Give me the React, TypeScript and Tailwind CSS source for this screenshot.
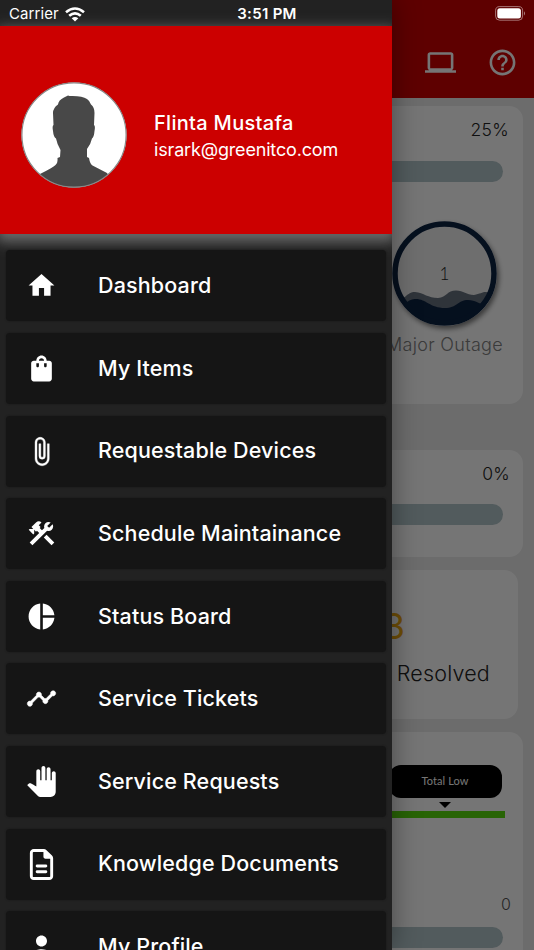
import type { ReactNode } from "react";
import type { IconType } from "react-icons";
import {
  MdAttachFile,
  MdConstruction,
  MdHelpOutline,
  MdHome,
  MdPanTool,
  MdPerson,
  MdPieChart,
  MdShoppingBag,
  MdTimeline,
} from "react-icons/md";
import { FaRegFileLines } from "react-icons/fa6";

const menu: { label: string; icon: IconType; size: number; stroke?: number }[] = [
  { label: "Dashboard", icon: MdHome, size: 31 },
  { label: "My Items", icon: MdShoppingBag, size: 31 },
  { label: "Requestable Devices", icon: MdAttachFile, size: 31, stroke: 0.3 },
  { label: "Schedule Maintainance", icon: MdConstruction, size: 31 },
  { label: "Status Board", icon: MdPieChart, size: 31 },
  { label: "Service Tickets", icon: MdTimeline, size: 31, stroke: 0.4 },
  { label: "Service Requests", icon: MdPanTool, size: 31 },
  { label: "Knowledge Documents", icon: FaRegFileLines, size: 31 },
  { label: "My Profile", icon: MdPerson, size: 33 },
];

const Avatar = () => (
  <svg width="106" height="106" viewBox="0 0 106 106" className="shrink-0">
    <clipPath id="face">
      <circle cx="53" cy="53" r="52.5" />
    </clipPath>
    <circle cx="53" cy="53" r="52.5" fill="#fff" />
    <path
      clipPath="url(#face)"
      fill="#484848"
      d="M47 13.5 L48.5 14 Q61 13.500 66 17 Q69 19 70 22.500 Q73.500 25 73.500 31 L73 43 Q74.500 44 73.500 49 Q73 55 71 56.500 Q69.500 63 66 67 L66 75 L68 76 Q69 82 71.500 83.500 L86 91 L96 106 L8 106 L19 92 Q33 85 34.500 83 Q37 81 36.500 76 L39 75 L39.500 68 Q36 62 35 56.500 Q32.500 55 32 49 Q31 44 32.500 43 L32 31 Q32 26 37 22.500 Q37.500 18 43 15.500 Z"
    />
    <circle cx="53" cy="53" r="52.1" fill="none" stroke="#888" strokeWidth="1.200" />
  </svg>
);

const Wave = () => (
  <div className="relative mr-[6px] h-[105px] w-[105px] rounded-full shadow-[2px_3px_5px_rgba(0,0,0,0.5)]">
    <svg width="105" height="105" viewBox="0 0 105 105">
      <clipPath id="bowl">
        <circle cx="52.500" cy="52.500" r="50" />
      </clipPath>
      <circle cx="52.500" cy="52.500" r="50" fill="#f0f0f0" />
      <g clipPath="url(#bowl)">
        <path
          d="M0 80 C14 80 14 71 23 71 C32 72 36 77 46 77 C55 76 55 69.500 64 69.500 C72 69.500 74 74 82 74 C88 73 90 71 94 71 L105 73 V105 H0 Z"
          fill="#66717f"
        />
        <path
          d="M0 86 C16 84 15 78 24 78 C34 78 38 87 53 87 C65 87 66 79 76 79 C84 79 86 83 92 83 H105 V105 H0 Z"
          fill="#0d2343"
        />
      </g>
      <circle cx="52.500" cy="52.500" r="49.500" fill="none" stroke="#0d2343" strokeWidth="5.500" />
    </svg>
    <span className="absolute inset-0 flex items-center justify-center pt-px font-['Lato'] text-[17px] font-light">
      1
    </span>
  </div>
);

const Bar = () => <div className="h-[21px] w-full rounded-full bg-[#b4c6ca]" />;

const Card = ({ className, children }: { className: string; children: ReactNode }) => (
  <section className={`flex shrink-0 flex-col items-end rounded-[14px] bg-white ${className}`}>
    {children}
  </section>
);

const Page = () => (
  <div className="flex h-full flex-col bg-[#ebebeb] text-[#222]">
    <header className="flex h-[98px] shrink-0 items-end justify-end gap-[31px] bg-[#cc0000] pr-[16px] pb-[20px] text-white">
      <svg width="31" height="31" viewBox="0 0 24 24" fill="currentColor">
        <path d="M20 18c1.100 0 2-.900 2-2V6c0-1.100-.900-2-2-2H4c-1.100 0-2 .900-2 2v10c0 1.100.900 2 2 2H0v2h24v-2h-4zM4 6h16v10.500H4V6z" />
      </svg>
      <MdHelpOutline size={31} />
    </header>

    <main className="flex min-h-0 grow flex-col overflow-hidden pt-[8px] pr-[11px] pl-[11px]">
      <Card className="h-[298px] pt-[12px] pr-[20px] pl-[20px]">
        <p className="-mr-[6px] text-[17.500px] leading-[24px] font-light tracking-[0.3px]">25%</p>
        <div className="mt-[18.500px] w-full">
          <Bar />
        </div>
        <div className="mt-[39.500px]">
          <Wave />
        </div>
        <p className="mt-[7px] text-[18px] leading-[24px] font-light tracking-[0.300px] text-[#808080]">
          Major Outage
        </p>
      </Card>

      <Card className="mt-[46px] h-[107px] pt-[12px] pr-[20px] pl-[20px]">
        <p className="-mr-[7px] text-[17.500px] leading-[24px] font-light tracking-[0.3px]">0%</p>
        <div className="mt-[18px] w-full">
          <Bar />
        </div>
      </Card>

      <Card className="mt-[13px] mr-[5px] h-[149px] pt-[35px] pr-[28px]">
        <p className="mr-[85px] text-[36px] leading-[42px] text-[#f0ab10]">3</p>
        <p className="mt-[12px] text-[21.500px] leading-[28px] font-light tracking-[0.200px]">
          Resolved
        </p>
      </Card>

      <Card className="mt-[13px] h-[260px] pt-[33px] pr-[20px] pl-[20px]">
        <div className="mr-[1.500px] flex flex-col items-center">
          <div className="flex h-[33px] w-[113px] items-center justify-center rounded-[12px] bg-black font-['Lato'] text-[11px] tracking-[0.100px] text-white">
            Total Low
          </div>
          <svg width="12" height="6" viewBox="0 0 12 6" className="mt-[4px]">
            <path d="M0 0H12L6 6Z" fill="#000" />
          </svg>
        </div>
        <div className="-mr-[2px] mt-[3px] h-[7px] w-full bg-[#57d90b]" />
        <p className="-mr-[8px] mt-[74px] text-[16px] leading-[24px] font-light text-[#555]">0</p>
        <div className="mt-[11px] w-full">
          <Bar />
        </div>
      </Card>
    </main>
  </div>
);

const Drawer = () => (
  <aside className="absolute top-0 left-0 flex h-full w-[392px] flex-col overflow-hidden bg-[#222] text-white">
    <div className="mt-[26px] flex h-[208px] shrink-0 items-center bg-[#cc0000] pt-[10px] pl-[21px] shadow-[0_5px_12px_3px_#6a6a6a]">
      <Avatar />
      <div className="ml-[27px] pt-[2px]">
        <p className="text-[20px] leading-[27px] font-medium tracking-[0.300px]">Flinta Mustafa</p>
        <p className="text-[18px] leading-[26px] tracking-[-0.170px]">isrark@greenitco.com</p>
      </div>
    </div>

    <nav className="flex flex-col gap-[11.600px] px-[6px] pt-[16.400px]">
      {menu.map(({ label, icon: Icon, size, stroke = 0 }) => (
        <a
          key={label}
          className="flex h-[71px] shrink-0 items-center rounded-[4px] bg-[#151515] shadow-[0_0_2px_#151515]"
        >
          <span className="flex w-[71px] justify-center">
            <Icon size={size} strokeWidth={stroke} className="[&>path[fill=none]]:stroke-none" />
          </span>
          <span className="ml-[21px] pb-px text-[21.500px] font-medium tracking-[0.140px]">
            {label}
          </span>
        </a>
      ))}
    </nav>
  </aside>
);

const StatusBar = () => (
  <div className="absolute inset-x-0 top-0 flex h-[27px] items-center justify-between pr-[8px] pl-[9px] text-white">
    <div className="flex w-[119px] items-center gap-[6px] pt-px text-[15px] tracking-[0.100px]">
      Carrier
      <svg width="20" height="15" viewBox="0 0 20 15" fill="none" stroke="#fff" strokeWidth="2.600">
        <path d="M1 5.300 Q10 -2.300 19 5.300" />
        <path d="M4.200 8.800 Q10 3.800 15.800 8.800" />
        <path d="M10 14.500 L6.700 11.300 Q10 8.500 13.300 11.300 Z" fill="#fff" stroke="none" />
      </svg>
    </div>
    <p className="pt-px text-[15px] font-semibold tracking-[0.300px]">3:51 PM</p>
    <div className="flex w-[120px] justify-end">
      <svg width="31" height="15" viewBox="0 0 31 15">
        <rect x="0.600" y="0.600" width="27" height="13.600" rx="4" fill="none" stroke="#fff" strokeOpacity="0.450" />
        <rect x="2.300" y="2.300" width="23.600" height="10.200" rx="2.500" fill="#fff" />
        <path d="M29 5.200 Q31 7.400 29 9.600 Z" fill="#fff" fillOpacity="0.500" />
      </svg>
    </div>
  </div>
);

const App = () => {
  return (
    <div className="relative h-[950px] w-[534px] overflow-hidden font-['Inter',sans-serif]">
      <Page />
      <div className="absolute inset-0 bg-black/54" />
      <div className="absolute top-0 left-0 h-full w-[392px] shadow-[0_0_26px_rgba(0,0,0,0.400)]" />
      <Drawer />
      <StatusBar />
    </div>
  );
};

export default App;
